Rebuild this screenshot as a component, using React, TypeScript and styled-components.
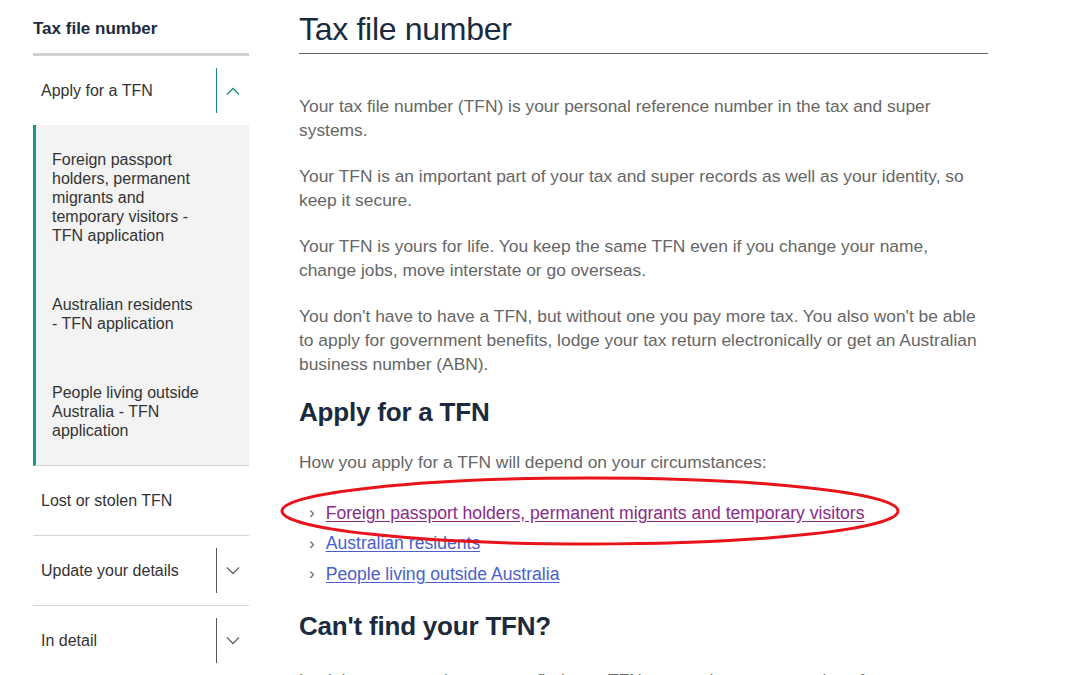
import styled, { createGlobalStyle } from 'styled-components';

const GlobalStyle = createGlobalStyle`
  html, body {
    margin: 0;
    padding: 0;
    background: #fff;
    font-family: "Liberation Sans", Arial, sans-serif;
    overflow: hidden;
  }
`;

const Page = styled.div`
  display: flex;
  align-items: flex-start;
  gap: 50px;
  padding-left: 33px;
  height: 675px;
  overflow: hidden;
`;

const Sidebar = styled.nav`
  width: 216px;
  flex-shrink: 0;
`;

const SideTitle = styled.div`
  font-size: 17px;
  font-weight: bold;
  color: #1b2a3d;
  padding: 19px 0 14px;
  border-bottom: 3px solid #cfcfcf;
`;

const NavRow = styled.div<{ $divider?: boolean }>`
  display: flex;
  align-items: center;
  height: 69px;
  border-bottom: ${(p) => (p.$divider ? '1px solid #d4d4d4' : 'none')};
`;

const NavLabel = styled.span`
  flex: 1;
  padding-left: 8px;
  font-size: 16px;
  color: #333;
`;

const Toggle = styled.span<{ $open?: boolean }>`
  display: flex;
  align-items: center;
  justify-content: center;
  width: 32px;
  height: 45px;
  border-left: 1px solid ${(p) => (p.$open ? '#1f8a82' : '#555')};
  color: ${(p) => (p.$open ? '#1f8a82' : '#666')};
`;

const SubMenu = styled.div`
  background: #f3f3f3;
  border-left: 3px solid #15978f;
  border-bottom: 1px solid #d4d4d4;
`;

const SubItem = styled.div`
  padding: 25px 0 25px 16px;
  max-width: 148px;
  font-size: 16px;
  line-height: 19px;
  color: #333;
`;

const Main = styled.main`
  width: 689px;
  flex-shrink: 0;
  position: relative;
`;

const Title = styled.h1`
  margin: 0;
  padding: 11px 0 5px;
  font-size: 32px;
  font-weight: normal;
  letter-spacing: -0.3px;
  color: #1b2a3d;
  border-bottom: 1px solid #666;
`;

const Intro = styled.div`
  padding-top: 40px;
`;

const Para = styled.p`
  margin: 0 0 22px;
  font-size: 17.4px;
  line-height: 24px;
  color: #666;
`;

const Heading = styled.h2<{ $after?: number }>`
  margin: -1px 0 ${(p) => p.$after ?? 22}px;
  font-size: 26px;
  font-weight: bold;
  letter-spacing: -0.2px;
  color: #1b2a3d;
`;

const LinkList = styled.ul`
  list-style: none;
  margin: 0 0 22px;
  padding: 2px 0 0;
`;

const LinkItem = styled.li`
  display: flex;
  align-items: center;
  gap: 11px;
  height: 30.5px;
  padding-left: 10px;
  font-size: 17.6px;
`;

const Arrow = styled.span`
  color: #666;
  font-size: 17px;
`;

const Link = styled.a<{ $visited?: boolean }>`
  color: ${(p) => (p.$visited ? '#8a2a8a' : '#4b60cc')};
  text-decoration: underline;
  text-underline-offset: 2px;
`;

const Ring = styled.svg`
  position: absolute;
  left: -20px;
  top: 475px;
  pointer-events: none;
`;

const Chevron = ({ up }: { up?: boolean }) => (
  <svg width="14" height="8" viewBox="0 0 14 8" fill="none" stroke="currentColor" strokeWidth="1.4">
    <path d={up ? 'M1 7.5 7 1.5 13 7.5' : 'M1 0.5 7 6.5 13 0.5'} />
  </svg>
);

const subItems = [
  'Foreign passport holders, permanent migrants and temporary visitors - TFN application',
  'Australian residents - TFN application',
  'People living outside Australia - TFN application',
];

const links = [
  { text: 'Foreign passport holders, permanent migrants and temporary visitors', visited: true },
  { text: 'Australian residents', visited: false },
  { text: 'People living outside Australia', visited: false },
];

export default function App() {
  return (
    <>
      <GlobalStyle />
      <Page>
        <Sidebar>
          <SideTitle>Tax file number</SideTitle>
          <NavRow>
            <NavLabel>Apply for a TFN</NavLabel>
            <Toggle $open>
              <Chevron up />
            </Toggle>
          </NavRow>
          <SubMenu>
            {subItems.map((s) => (
              <SubItem key={s}>{s}</SubItem>
            ))}
          </SubMenu>
          <NavRow $divider>
            <NavLabel>Lost or stolen TFN</NavLabel>
          </NavRow>
          <NavRow $divider>
            <NavLabel>Update your details</NavLabel>
            <Toggle>
              <Chevron />
            </Toggle>
          </NavRow>
          <NavRow>
            <NavLabel>In detail</NavLabel>
            <Toggle>
              <Chevron />
            </Toggle>
          </NavRow>
        </Sidebar>

        <Main>
          <Title>Tax file number</Title>
          <Intro>
            <Para>
              Your tax file number (TFN) is your personal reference number in the tax and super systems.
            </Para>
            <Para>
              Your TFN is an important part of your tax and super records as well as your identity, so keep it
              secure.
            </Para>
            <Para>
              Your TFN is yours for life. You keep the same TFN even if you change your name, change jobs, move
              interstate or go overseas.
            </Para>
            <Para>
              You don't have to have a TFN, but without one you pay more tax. You also won't be able to apply for
              government benefits, lodge your tax return electronically or get an Australian business number (ABN).
            </Para>
          </Intro>
          <Heading>Apply for a TFN</Heading>
          <Para>How you apply for a TFN will depend on your circumstances:</Para>
          <LinkList>
            {links.map((l) => (
              <LinkItem key={l.text}>
                <Arrow>›</Arrow>
                <Link href="#" $visited={l.visited}>
                  {l.text}
                </Link>
              </LinkItem>
            ))}
          </LinkList>
          <Heading $after={26}>Can't find your TFN?</Heading>
          <Para>
            Look in your records, you may find your TFN on your income tax notice of assessment or a letter from us.
          </Para>
          <Ring width="624" height="74" viewBox="0 0 624 74">
            <ellipse cx="311" cy="36" rx="308" ry="33" fill="none" stroke="#e8141b" strokeWidth="3" />
          </Ring>
        </Main>
      </Page>
    </>
  );
}
